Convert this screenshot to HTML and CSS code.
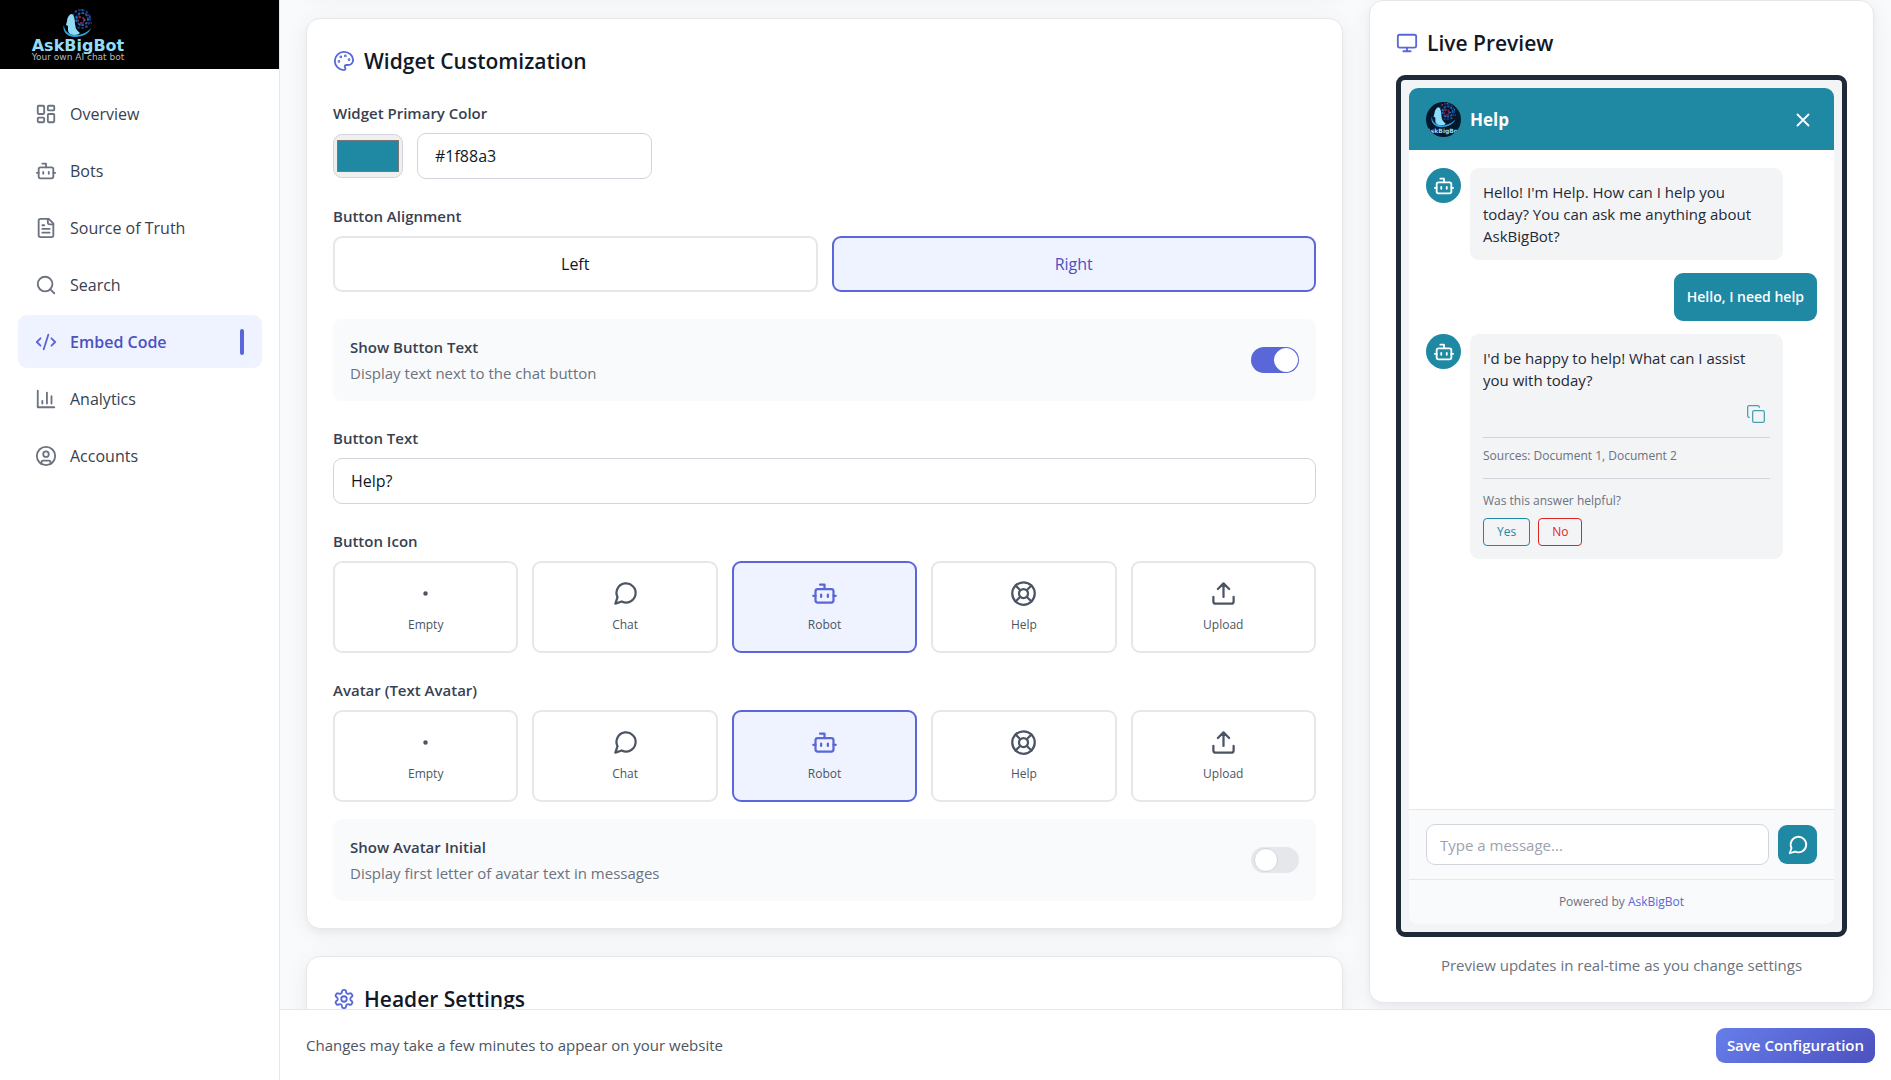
FILE: index.html
```html
<!DOCTYPE html>
<html lang="en">
<head>
    <meta charset="UTF-8">
    <meta name="viewport" content="width=device-width, initial-scale=1.0">
    <title>Embed Code - AskBigBot</title>
    <link rel="stylesheet" href="styles.css">
</head>
<body>
<!-- icon set -->
<svg class="sprite" aria-hidden="true">
    <symbol id="i-dashboard" viewBox="0 0 24 24"><rect x="3" y="3" width="7" height="9" rx="1"/><rect x="14" y="3" width="7" height="5" rx="1"/><rect x="14" y="12" width="7" height="9" rx="1"/><rect x="3" y="16" width="7" height="5" rx="1"/></symbol>
    <symbol id="i-bot" viewBox="0 0 24 24"><path d="M12 8V4H8"/><rect x="4" y="8" width="16" height="12" rx="2"/><path d="M2 14h2M20 14h2M15 13v2M9 13v2"/></symbol>
    <symbol id="i-file" viewBox="0 0 24 24"><path d="M15 2H6a2 2 0 0 0-2 2v16a2 2 0 0 0 2 2h12a2 2 0 0 0 2-2V7Z"/><path d="M14 2v4a2 2 0 0 0 2 2h4M10 9H8M16 13H8M16 17H8"/></symbol>
    <symbol id="i-search" viewBox="0 0 24 24"><circle cx="11" cy="11" r="8"/><path d="m21 21-4.3-4.3"/></symbol>
    <symbol id="i-code" viewBox="0 0 24 24"><path d="m18 16 4-4-4-4M6 8l-4 4 4 4M14.5 4l-5 16"/></symbol>
    <symbol id="i-chart" viewBox="0 0 24 24"><path d="M3 3v18h18M18 17V9M13 17V5M8 17v-3"/></symbol>
    <symbol id="i-user" viewBox="0 0 24 24"><circle cx="12" cy="12" r="10"/><circle cx="12" cy="10" r="3"/><path d="M7 20.662V19a2 2 0 0 1 2-2h6a2 2 0 0 1 2 2v1.662"/></symbol>
    <symbol id="i-palette" viewBox="0 0 24 24"><circle cx="13.5" cy="6.5" r=".5"/><circle cx="17.5" cy="10.5" r=".5"/><circle cx="8.5" cy="7.5" r=".5"/><circle cx="6.5" cy="12.5" r=".5"/><path d="M12 2C6.5 2 2 6.5 2 12s4.5 10 10 10c.926 0 1.648-.746 1.648-1.688 0-.437-.18-.835-.437-1.125-.29-.289-.438-.652-.438-1.125a1.64 1.64 0 0 1 1.668-1.668h1.996c3.051 0 5.555-2.503 5.555-5.554C21.965 6.012 17.461 2 12 2z"/></symbol>
    <symbol id="i-monitor" viewBox="0 0 24 24"><rect x="2" y="3" width="20" height="14" rx="2"/><path d="M8 21h8M12 17v4"/></symbol>
    <symbol id="i-settings" viewBox="0 0 24 24"><path d="M12.22 2h-.44a2 2 0 0 0-2 2v.18a2 2 0 0 1-1 1.73l-.43.25a2 2 0 0 1-2 0l-.15-.08a2 2 0 0 0-2.73.73l-.22.38a2 2 0 0 0 .73 2.73l.15.1a2 2 0 0 1 1 1.72v.51a2 2 0 0 1-1 1.74l-.15.09a2 2 0 0 0-.73 2.73l.22.38a2 2 0 0 0 2.73.73l.15-.08a2 2 0 0 1 2 0l.43.25a2 2 0 0 1 1 1.73V20a2 2 0 0 0 2 2h.44a2 2 0 0 0 2-2v-.18a2 2 0 0 1 1-1.73l.43-.25a2 2 0 0 1 2 0l.15.08a2 2 0 0 0 2.73-.73l.22-.39a2 2 0 0 0-.73-2.73l-.15-.08a2 2 0 0 1-1-1.74v-.5a2 2 0 0 1 1-1.74l.15-.09a2 2 0 0 0 .73-2.73l-.22-.38a2 2 0 0 0-2.73-.73l-.15.08a2 2 0 0 1-2 0l-.43-.25a2 2 0 0 1-1-1.73V4a2 2 0 0 0-2-2z"/><circle cx="12" cy="12" r="3"/></symbol>
    <symbol id="i-dot" viewBox="0 0 24 24"><circle cx="12" cy="12" r="1"/></symbol>
    <symbol id="i-chat" viewBox="0 0 24 24"><path d="m3 21 1.9-5.7a8.5 8.5 0 1 1 3.8 3.8z"/></symbol>
    <symbol id="i-help" viewBox="0 0 24 24"><circle cx="12" cy="12" r="10"/><circle cx="12" cy="12" r="4"/><path d="m4.93 4.93 4.24 4.24M14.83 9.17l4.24-4.24M14.83 14.83l4.24 4.24M9.17 14.83l-4.24 4.24"/></symbol>
    <symbol id="i-upload" viewBox="0 0 24 24"><path d="M21 15v4a2 2 0 0 1-2 2H5a2 2 0 0 1-2-2v-4M17 8l-5-5-5 5M12 3v12"/></symbol>
    <symbol id="i-close" viewBox="0 0 24 24"><path d="M18 6 6 18M6 6l12 12"/></symbol>
    <symbol id="i-copy" viewBox="0 0 24 24"><rect x="8" y="8" width="14" height="14" rx="2"/><path d="M4 16c-1.1 0-2-.9-2-2V4c0-1.1.9-2 2-2h10c1.1 0 2 .9 2 2"/></symbol>
    <symbol id="i-head" viewBox="0 0 30 30">
        <g fill="none" stroke-width="2" stroke-linecap="round">
            <circle cx="18" cy="11" r="9" stroke="#0d3d7c" stroke-dasharray="1 3"/>
            <circle cx="19" cy="11" r="6" stroke="#1f5fae" stroke-dasharray="1 3"/>
            <circle cx="18" cy="12" r="3" stroke="#7a2350" stroke-dasharray="1 3"/>
        </g>
        <g fill="#d8365c"><circle cx="13" cy="3" r=".7"/><circle cx="23" cy="6" r=".7"/><circle cx="28" cy="15" r=".7"/><circle cx="20" cy="15" r=".7"/><circle cx="16" cy="8" r=".7"/><circle cx="24" cy="19" r=".7"/></g>
        <g fill="#3f9be8"><circle cx="19" cy="2" r=".7"/><circle cx="27" cy="9" r=".7"/><circle cx="22" cy="12" r=".7"/><circle cx="17" cy="17" r=".7"/><circle cx="14" cy="10" r=".7"/></g>
        <path fill="#8fdcf8" d="M8 6c-2 1-4 4-4 7l-1 4 2 1v4c0 3 3 5 7 5 2 0 4-1 5-2-3-2-5-5-5-9 0-5-1-10-4-10z"/>
        <path fill="#2ba3e0" d="M1 17c-2 5 2 12 11 12 8 0 15-4 16-9-3 4-9 7-15 7C6 27 1 23 1 17z"/>
    </symbol>
</svg>

<div class="app">
<aside class="sidebar">
    <div class="brand">
        <div class="logo">
            <svg class="logo-mark"><use href="#i-head"/></svg>
            <span class="logo-name">AskBigBot</span>
            <span class="logo-tagline">Your own AI chat bot</span>
        </div>
    </div>
    <nav class="nav">
        <a class="nav-item" href="#"><svg class="icon"><use href="#i-dashboard"/></svg>Overview</a>
        <a class="nav-item" href="#"><svg class="icon"><use href="#i-bot"/></svg>Bots</a>
        <a class="nav-item" href="#"><svg class="icon"><use href="#i-file"/></svg>Source of Truth</a>
        <a class="nav-item" href="#"><svg class="icon"><use href="#i-search"/></svg>Search</a>
        <a class="nav-item active" href="#" aria-current="page"><svg class="icon"><use href="#i-code"/></svg>Embed Code</a>
        <a class="nav-item" href="#"><svg class="icon"><use href="#i-chart"/></svg>Analytics</a>
        <a class="nav-item" href="#"><svg class="icon"><use href="#i-user"/></svg>Accounts</a>
    </nav>
</aside>

<div class="main">
<main class="content">
    <div class="settings">
        <section class="card card-prev"></section>

        <section class="card">
            <h2 class="card-title"><svg class="icon"><use href="#i-palette"/></svg>Widget Customization</h2>

            <div class="field">
                <label class="label" for="color-text">Widget Primary Color</label>
                <div class="color-row">
                    <input class="color-input" type="color" value="#1f88a3" aria-label="Pick primary color">
                    <input class="input color-text" id="color-text" type="text" value="#1f88a3">
                </div>
            </div>

            <div class="field">
                <span class="label">Button Alignment</span>
                <div class="align-row">
                    <button class="option align-btn" type="button">Left</button>
                    <button class="option align-btn selected" type="button">Right</button>
                </div>
            </div>

            <div class="toggle-row field">
                <label for="show-text">
                    <span class="toggle-title">Show Button Text</span>
                    <span class="toggle-desc">Display text next to the chat button</span>
                </label>
                <input class="switch" id="show-text" type="checkbox" checked>
            </div>

            <div class="field">
                <label class="label" for="button-text">Button Text</label>
                <input class="input" id="button-text" type="text" value="Help?">
            </div>

            <div class="field">
                <span class="label">Button Icon</span>
                <div class="icon-grid">
                    <button class="option icon-btn" type="button"><svg class="icon icon-lg"><use href="#i-dot"/></svg><span>Empty</span></button>
                    <button class="option icon-btn" type="button"><svg class="icon icon-lg"><use href="#i-chat"/></svg><span>Chat</span></button>
                    <button class="option icon-btn selected" type="button"><svg class="icon icon-lg"><use href="#i-bot"/></svg><span>Robot</span></button>
                    <button class="option icon-btn" type="button"><svg class="icon icon-lg"><use href="#i-help"/></svg><span>Help</span></button>
                    <button class="option icon-btn" type="button"><svg class="icon icon-lg"><use href="#i-upload"/></svg><span>Upload</span></button>
                </div>
            </div>

            <div class="field avatar-field">
                <span class="label">Avatar (Text Avatar)</span>
                <div class="icon-grid">
                    <button class="option icon-btn" type="button"><svg class="icon icon-lg"><use href="#i-dot"/></svg><span>Empty</span></button>
                    <button class="option icon-btn" type="button"><svg class="icon icon-lg"><use href="#i-chat"/></svg><span>Chat</span></button>
                    <button class="option icon-btn selected" type="button"><svg class="icon icon-lg"><use href="#i-bot"/></svg><span>Robot</span></button>
                    <button class="option icon-btn" type="button"><svg class="icon icon-lg"><use href="#i-help"/></svg><span>Help</span></button>
                    <button class="option icon-btn" type="button"><svg class="icon icon-lg"><use href="#i-upload"/></svg><span>Upload</span></button>
                </div>
                <div class="toggle-row">
                    <label for="show-initial">
                        <span class="toggle-title">Show Avatar Initial</span>
                        <span class="toggle-desc">Display first letter of avatar text in messages</span>
                    </label>
                    <input class="switch" id="show-initial" type="checkbox">
                </div>
            </div>
        </section>

        <section class="card">
            <h2 class="card-title"><svg class="icon"><use href="#i-settings"/></svg>Header Settings</h2>
        </section>
    </div>

    <section class="card preview">
        <h2 class="card-title"><svg class="icon"><use href="#i-monitor"/></svg>Live Preview</h2>
        <div class="device">
            <div class="widget">
                <div class="widget-header">
                    <span class="bot-logo"><svg class="bot-logo-mark"><use href="#i-head"/></svg><span class="bot-logo-name">AskBigBot</span></span>
                    <span class="widget-name">Help</span>
                    <button class="close-btn" type="button" aria-label="Close"><svg class="icon"><use href="#i-close"/></svg></button>
                </div>
                <div class="messages">
                    <div class="message">
                        <span class="avatar"><svg class="icon"><use href="#i-bot"/></svg></span>
                        <div class="bubble">Hello! I'm Help. How can I help you today? You can ask me anything about AskBigBot?</div>
                    </div>
                    <div class="message from-user">
                        <div class="bubble">Hello, I need help</div>
                    </div>
                    <div class="message">
                        <span class="avatar"><svg class="icon"><use href="#i-bot"/></svg></span>
                        <div class="bubble">
                            <p>I'd be happy to help! What can I assist you with today?</p>
                            <button class="copy-btn" type="button" aria-label="Copy"><svg class="icon"><use href="#i-copy"/></svg></button>
                            <div class="sources">Sources: Document 1, Document 2</div>
                            <div class="feedback">
                                <p>Was this answer helpful?</p>
                                <div class="feedback-row">
                                    <button class="vote yes" type="button">Yes</button>
                                    <button class="vote no" type="button">No</button>
                                </div>
                            </div>
                        </div>
                    </div>
                </div>
                <div class="composer">
                    <input class="composer-input" type="text" placeholder="Type a message..." aria-label="Message">
                    <button class="send-btn" type="button" aria-label="Send"><svg class="icon"><use href="#i-chat"/></svg></button>
                </div>
                <div class="powered">Powered by <a href="#">AskBigBot</a></div>
            </div>
        </div>
        <p class="preview-note">Preview updates in real-time as you change settings</p>
    </section>
</main>

<footer class="save-bar">
    <span>Changes may take a few minutes to appear on your website</span>
    <button class="save-btn" type="button">Save Configuration</button>
</footer>
</div>
</div>
</body>
</html>
```
FILE: styles.css
```css
* {
margin: 0;
padding: 0;
box-sizing: border-box;
}

body {
font-family: "Open Sans", "Noto Sans", sans-serif;
font-size: 16px;
color: #111827;
background-color: #f9fafc;
}

button,
input {
font: inherit;
color: inherit;
}

button {
cursor: pointer;
}

a {
text-decoration: none;
}

.sprite {
display: none;
}

.icon {
width: 22px;
height: 22px;
flex-shrink: 0;
fill: none;
stroke: currentColor;
stroke-width: 2;
stroke-linecap: round;
stroke-linejoin: round;
}

.icon-lg {
width: 27px;
height: 27px;
}

.app {
display: flex;
height: 100vh;
overflow: hidden;
}

/* sidebar */
.sidebar {
width: 280px;
flex-shrink: 0;
background-color: #fff;
border-right: 1px solid #e5e7eb;
}

.brand {
background-color: #000;
padding: 8px 30px 7px;
}

.logo {
display: flex;
flex-direction: column;
align-items: center;
width: 96px;
font-family: "DejaVu Sans", sans-serif;
white-space: nowrap;
}

.logo-mark {
width: 30px;
height: 30px;
}

.logo-name {
font-size: 16px;
line-height: 15px;
font-weight: 700;
color: #93dbf7;
}

.logo-tagline {
font-size: 9px;
line-height: 9px;
color: #b5b9bd;
}

.nav {
display: flex;
flex-direction: column;
gap: 4px;
padding: 18px 17px 18px 18px;
}

.nav-item {
display: flex;
align-items: center;
gap: 13px;
height: 53px;
padding: 0 18px 0 17px;
border-radius: 9px;
color: #374151;
}

.nav-item .icon {
color: #6b7280;
}

.nav-item.active {
background-color: #eff3ff;
color: #4c51bf;
font-weight: 600;
}

.nav-item.active .icon {
color: #5a67d8;
}

.nav-item.active::after {
content: "";
width: 4px;
height: 26px;
margin-left: auto;
border-radius: 2px;
background-color: #5a67d8;
}

/* main area */
.main {
flex: 1;
min-width: 0;
display: flex;
flex-direction: column;
}

.content {
flex: 1;
min-height: 0;
overflow: hidden;
display: grid;
grid-template-columns: minmax(0, 1fr) 505px;
align-items: start;
gap: 26px;
padding: 0 17px 0 26px;
}

/* the form column is scrolled past its first card */
.settings {
display: flex;
flex-direction: column;
gap: 27px;
margin-top: -65px;
}

.card {
background-color: #fff;
border: 1px solid #e5e7eb;
border-radius: 14px;
padding: 27px 26px;
box-shadow: 0 4px 6px rgba(0, 0, 0, 0.03), 0 4px 24px rgba(0, 0, 0, 0.06);
}

.card-title {
display: flex;
align-items: center;
gap: 9px;
margin-bottom: 27px;
font-size: 21px;
line-height: 30px;
font-weight: 600;
}

.card-title .icon {
color: #5a67d8;
}

.field {
margin-bottom: 27px;
}

.field:last-child {
margin-bottom: 0;
}

.label {
display: block;
margin-bottom: 9px;
font-size: 15px;
line-height: 21px;
font-weight: 600;
color: #374151;
}

.input {
display: block;
width: 100%;
height: 46px;
padding: 0 17px;
border: 1px solid #d1d5db;
border-radius: 9px;
background-color: #fff;
}

.color-row {
display: flex;
align-items: center;
gap: 14px;
}

.color-input {
width: 70px;
height: 44px;
padding: 1px;
border: 1px solid #d1d5db;
border-radius: 9px;
background-color: #efefef;
}

.color-text {
width: 235px;
}

.option {
border: 2px solid #e5e7eb;
border-radius: 9px;
background-color: #fff;
}

.option.selected {
border-color: #5a67d8;
background-color: #eff3ff;
}

.align-row {
display: grid;
grid-template-columns: 1fr 1fr;
gap: 14px;
}

.align-btn {
height: 56px;
}

.align-btn.selected {
color: #4c51bf;
}

.toggle-row {
display: flex;
align-items: center;
justify-content: space-between;
padding: 15px 17px;
border-radius: 9px;
background-color: #f9fafc;
}

.toggle-title,
.toggle-desc {
display: block;
font-size: 15px;
line-height: 26px;
}

.toggle-title {
font-weight: 600;
color: #374151;
}

.toggle-desc {
color: #6b7280;
}

.switch {
appearance: none;
display: flex;
align-items: center;
width: 48px;
height: 26px;
padding: 0 3px;
border-radius: 13px;
background-color: #e5e7eb;
cursor: pointer;
}

.switch::before {
content: "";
width: 22px;
height: 22px;
border: 1px solid #d1d5db;
border-radius: 50%;
background-color: #fff;
}

.switch:checked {
justify-content: flex-end;
padding: 0 1px;
background-color: #5a67d8;
}

.switch:checked::before {
border-color: #fff;
}

.icon-grid {
display: grid;
grid-template-columns: repeat(5, 1fr);
gap: 14px;
}

.icon-btn {
display: flex;
flex-direction: column;
align-items: center;
gap: 8px;
padding: 17px 8px;
font-size: 12px;
line-height: 19px;
color: #4b5563;
}

.icon-btn.selected .icon {
color: #5a67d8;
}

.avatar-field .toggle-row {
margin-top: 17px;
}

/* preview */
.preview .card-title {
margin-bottom: 17px;
}

.device {
display: flex;
height: calc(100vh - 218px);
padding: 8px;
border: 5px solid #1f2937;
border-radius: 9px;
background-color: #f3f4f6;
}

.widget {
flex: 1;
min-width: 0;
display: flex;
flex-direction: column;
border-radius: 9px;
overflow: hidden;
background-color: #fff;
font-size: 15px;
line-height: 22px;
}

.widget-header {
display: flex;
align-items: center;
gap: 9px;
padding: 14px 17px 13px;
background-color: #1f88a3;
color: #fff;
}

.bot-logo {
display: flex;
flex-direction: column;
align-items: center;
width: 35px;
height: 35px;
border-radius: 50%;
overflow: hidden;
background-color: #04172b;
}

.bot-logo-mark {
width: 26px;
height: 26px;
flex-shrink: 0;
}

.bot-logo-name {
font-family: "DejaVu Sans", sans-serif;
font-size: 6px;
line-height: 5px;
font-weight: 700;
color: #93dbf7;
}

.widget-name {
font-size: 17px;
font-weight: 700;
}

.close-btn {
display: flex;
margin-left: auto;
padding: 3px;
border: 0;
background: none;
}

.messages {
flex: 1;
display: flex;
flex-direction: column;
gap: 13px;
padding: 18px 17px;
}

.message {
display: flex;
align-items: flex-start;
gap: 9px;
}

.message.from-user {
justify-content: flex-end;
}

.avatar {
display: flex;
align-items: center;
justify-content: center;
width: 35px;
height: 35px;
flex-shrink: 0;
border-radius: 50%;
background-color: #1f88a3;
color: #fff;
}

.bubble {
max-width: 80%;
padding: 13px;
border-radius: 9px;
background-color: #f3f4f6;
color: #1f2937;
}

.from-user .bubble {
background-color: #1f88a3;
color: #fff;
font-size: 14px;
font-weight: 600;
}

.copy-btn {
display: block;
margin: 9px 0 9px auto;
padding: 4px;
border: 0;
background: none;
color: #1f88a3;
opacity: 0.8;
}

.copy-btn .icon {
display: block;
width: 20px;
height: 20px;
stroke-width: 1.5;
}

.sources,
.feedback {
border-top: 1px solid #d1d5db;
font-size: 12px;
line-height: 18px;
color: #6b7280;
}

.sources {
padding: 9px 0 13px;
}

.feedback {
padding-top: 13px;
}

.feedback-row {
display: flex;
gap: 8px;
margin-top: 8px;
}

.vote {
height: 28px;
padding: 0 13px;
border: 1px solid;
border-radius: 4px;
background: none;
}

.vote.yes {
color: #1f88a3;
}

.vote.no {
color: #dc2626;
}

.composer {
display: flex;
align-items: center;
gap: 9px;
padding: 14px 17px;
border-top: 1px solid #e5e7eb;
background-color: #f9fafc;
}

.composer-input {
flex: 1;
min-width: 0;
height: 41px;
padding: 0 13px;
border: 1px solid #d1d5db;
border-radius: 9px;
background-color: #fff;
}

.composer-input::placeholder {
color: #9ca3af;
}

.send-btn {
display: flex;
align-items: center;
justify-content: center;
width: 39px;
height: 39px;
border: 0;
border-radius: 9px;
background-color: #1f88a3;
color: #fff;
}

.powered {
padding: 13px;
border-top: 1px solid #e5e7eb;
background-color: #f9fafc;
font-size: 12px;
line-height: 18px;
text-align: center;
color: #6b7280;
}

.powered a {
color: #5a67d8;
}

.preview-note {
margin-top: 18px;
font-size: 15px;
line-height: 20px;
text-align: center;
color: #6b7280;
}

/* bottom bar */
.save-bar {
display: flex;
align-items: center;
justify-content: space-between;
height: 71px;
padding: 0 16px 0 26px;
border-top: 1px solid #e5e7eb;
background-color: #fff;
font-size: 15px;
color: #4b5563;
}

.save-btn {
height: 35px;
padding: 0 11px;
border: 0;
border-radius: 9px;
background-image: linear-gradient(135deg, #667eea, #4c51bf);
color: #fff;
font-weight: 600;
}
```
